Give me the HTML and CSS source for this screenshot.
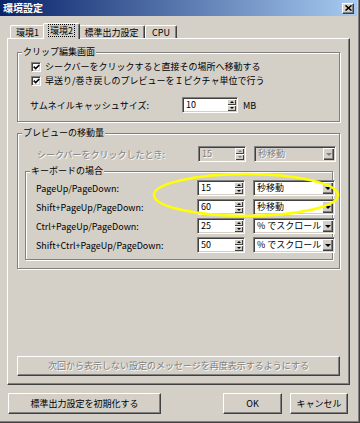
FILE: index.html
```html
<!DOCTYPE html>
<html lang="ja">
<head>
    <meta charset="UTF-8">
    <title>環境設定</title>
    <link rel="stylesheet" href="styles.css">
</head>
<body>

<div class="window">
    <!-- タイトルバー -->
    <div class="titlebar">
        <span class="title">環境設定</span>
        <span class="close-btn">
            <svg width="7" height="6" viewBox="0 0 7 6"><path d="M0.5 0.5 L6.5 5.5 M6.5 0.5 L0.5 5.5" stroke="#000" stroke-width="1.6"/></svg>
        </span>
    </div>

    <div class="dialog">
        <!-- タブ -->
        <div class="tabs">
            <div class="tab tab-1">環境1</div>
            <div class="tab tab-2 active"><span class="focus">環境2</span></div>
            <div class="tab tab-3">標準出力設定</div>
            <div class="tab tab-4">CPU</div>
        </div>

        <div class="panel">
            <fieldset class="group">
                <legend>クリップ編集画面</legend>
                <div class="group-body clip-body">
                    <div class="check-row">
                        <span class="checkbox"><svg width="7" height="6" viewBox="0 0 7 6"><path d="M0.7 2.6 L2.7 4.6 L6.3 1" stroke="#000" stroke-width="1.6" fill="none"/></svg></span>
                        <span>シークバーをクリックすると直接その場所へ移動する</span>
                    </div>
                    <div class="check-row">
                        <span class="checkbox"><svg width="7" height="6" viewBox="0 0 7 6"><path d="M0.7 2.6 L2.7 4.6 L6.3 1" stroke="#000" stroke-width="1.6" fill="none"/></svg></span>
                        <span>早送り/巻き戻しのプレビューをＩピクチャ単位で行う</span>
                    </div>
                    <div class="cache-row">
                        <span class="cache-label">サムネイルキャッシュサイズ:</span>
                        <span class="spin cache-spin">
                            <span class="field-value">10</span>
                            <span class="spin-btns"><span class="spin-btn up"></span><span class="spin-btn down"></span></span>
                        </span>
                        <span class="unit">MB</span>
                    </div>
                </div>
            </fieldset>

            <fieldset class="group preview-group">
                <legend>プレビューの移動量</legend>
                <div class="group-body preview-body">
                    <div class="move-row seek-row disabled">
                        <span class="move-label">シークバーをクリックしたとき:</span>
                        <span class="spin">
                            <span class="field-value">15</span>
                            <span class="spin-btns"><span class="spin-btn up"></span><span class="spin-btn down"></span></span>
                        </span>
                        <span class="combo">
                            <span class="field-value">秒移動</span>
                            <span class="combo-btn"></span>
                        </span>
                    </div>

                    <fieldset class="group key-group">
                        <legend>キーボードの場合</legend>
                        <div class="group-body key-body">
                            <div class="move-row">
                                <span class="move-label">PageUp/PageDown:</span>
                                <span class="spin"><span class="field-value">15</span><span class="spin-btns"><span class="spin-btn up"></span><span class="spin-btn down"></span></span></span>
                                <span class="combo"><span class="field-value">秒移動</span><span class="combo-btn"></span></span>
                            </div>
                            <div class="move-row">
                                <span class="move-label">Shift+PageUp/PageDown:</span>
                                <span class="spin"><span class="field-value">60</span><span class="spin-btns"><span class="spin-btn up"></span><span class="spin-btn down"></span></span></span>
                                <span class="combo"><span class="field-value">秒移動</span><span class="combo-btn"></span></span>
                            </div>
                            <div class="move-row">
                                <span class="move-label">Ctrl+PageUp/PageDown:</span>
                                <span class="spin"><span class="field-value">25</span><span class="spin-btns"><span class="spin-btn up"></span><span class="spin-btn down"></span></span></span>
                                <span class="combo"><span class="field-value">% でスクロール</span><span class="combo-btn"></span></span>
                            </div>
                            <div class="move-row">
                                <span class="move-label">Shift+Ctrl+PageUp/PageDown:</span>
                                <span class="spin"><span class="field-value">50</span><span class="spin-btns"><span class="spin-btn up"></span><span class="spin-btn down"></span></span></span>
                                <span class="combo"><span class="field-value">% でスクロール</span><span class="combo-btn"></span></span>
                            </div>
                        </div>
                    </fieldset>
                </div>
            </fieldset>

            <button class="btn reset-msg-btn" disabled>次回から表示しない設定のメッセージを再度表示するようにする</button>
        </div>

        <!-- 下のボタン -->
        <div class="footer">
            <button class="btn reset-btn">標準出力設定を初期化する</button>
            <button class="btn ok-btn">OK</button>
            <button class="btn cancel-btn">キャンセル</button>
        </div>
    </div>

    <!-- 黄色い丸（注釈） -->
    <svg class="highlight" width="360" height="423" viewBox="0 0 360 423">
        <ellipse cx="246" cy="195" rx="92" ry="21" fill="none" stroke="#ffff00" stroke-width="2.6"/>
    </svg>
</div>

</body>
</html>
```

FILE: styles.css
```css
body {
    margin: 0;
    background: #d4d0c8;
    font-family: "Noto Sans CJK JP", "Noto Sans", sans-serif;
    font-size: 9px;
    color: #000;
}

.window {
    position: relative;
    width: 360px;
    height: 423px;
    box-sizing: border-box;
    padding: 0 3px 3px 0;
    background: #d4d0c8;
    box-shadow: inset -1px -1px 0 #404040, inset -2px -2px 0 #808080;
    display: flex;
    flex-direction: column;
    overflow: hidden;
}

/* タイトルバー */
.titlebar {
    height: 16px;
    flex: none;
    display: flex;
    align-items: center;
    justify-content: space-between;
    padding: 0 3px;
    background: linear-gradient(90deg, #0a246a, #a6caf0);
}

.title {
    color: #fff;
    font-size: 10px;
    font-weight: bold;
    line-height: 14px;
}

.close-btn {
    width: 12px;
    height: 11px;
    box-sizing: border-box;
    background: #d4d0c8;
    border: 1px solid;
    border-color: #fff #404040 #404040 #fff;
    box-shadow: inset -1px -1px 0 #808080;
    display: flex;
    align-items: center;
    justify-content: center;
}

.dialog {
    flex: 1;
    display: flex;
    flex-direction: column;
    padding: 7px 7px 6px 7px;
}

/* タブ */
.tabs {
    display: flex;
    align-items: flex-end;
    height: 15px;
    flex: none;
    padding-left: 3px;
}

.tab {
    height: 13px;
    box-sizing: border-box;
    border: 1px solid #fff;
    border-bottom: none;
    border-right-color: #404040;
    border-radius: 2px 2px 0 0;
    box-shadow: inset -1px 0 0 #808080;
    background: #d4d0c8;
    display: flex;
    align-items: center;
    justify-content: center;
    line-height: 11px;
}

.tab-1 { width: 35px; }
.tab-2 { width: 37px; }
.tab-3 { width: 67px; }
.tab-4 { width: 32px; }

.tab.active {
    height: 16px;
    margin: 0 -2px -1px;
    position: relative;
    z-index: 1;
    padding-bottom: 2px;
}

.focus {
    outline: 1px dotted #000;
    padding: 0 1px;
}

.panel {
    flex: 1;
    display: flex;
    flex-direction: column;
    border: 1px solid;
    border-color: #fff #404040 #404040 #fff;
    box-shadow: inset -1px -1px 0 #808080;
    padding: 7px 9px 8px 9px;
}

/* グループ枠 */
.group {
    margin: 0;
    padding: 0;
    min-width: 0;
    border: 1px solid #808080;
    box-shadow: inset 1px 1px 0 #fff, 1px 1px 0 #fff;
}

.group legend {
    margin-left: 4px;
    padding: 0 1px;
    line-height: 12px;
    background: #d4d0c8;
}

.clip-body {
    padding: 2px 0 8px 12px;
}

.check-row {
    height: 14px;
    display: flex;
    align-items: center;
    gap: 4px;
    line-height: 12px;
}

.checkbox {
    width: 10px;
    height: 10px;
    margin-left: 1px;
    box-sizing: border-box;
    border: 1px solid;
    border-color: #808080 #fff #fff #808080;
    box-shadow: inset 1px 1px 0 #404040, inset -1px -1px 0 #d4d0c8;
    background: #fff;
    display: flex;
    align-items: center;
    justify-content: center;
}

.cache-row {
    margin-top: 9px;
    height: 16px;
    display: flex;
    align-items: center;
}

.cache-label {
    width: 152px;
}

.cache-spin {
    width: 56px;
}

.unit {
    margin-left: 5px;
}

.preview-group {
    margin-top: 5px;
}

.preview-body {
    padding: 7px 6px 8px 7px;
}

.seek-row {
    padding-left: 12px;
}

.key-group {
    margin-top: 3px;
}

.key-body {
    padding: 3px 0 6px 10px;
    display: flex;
    flex-direction: column;
    gap: 3px;
}

.move-row {
    display: grid;
    grid-template-columns: 153px 48px 82px;
    column-gap: 8px;
    align-items: center;
    height: 16px;
}

/* スピンボックスとコンボボックス */
.spin,
.combo {
    height: 16px;
    box-sizing: border-box;
    display: flex;
    border: 1px solid;
    border-color: #808080 #fff #fff #808080;
    box-shadow: inset 1px 1px 0 #404040, inset -1px -1px 0 #d4d0c8;
    background: #fff;
    padding: 1px;
}

.field-value {
    flex: 1;
    padding-left: 2px;
    line-height: 12px;
    white-space: nowrap;
    overflow: hidden;
}

.spin-btns {
    width: 9px;
    display: flex;
    flex-direction: column;
}

.spin-btn,
.combo-btn {
    background: #d4d0c8;
    box-shadow: inset 1px 1px 0 #fff, inset -1px -1px 0 #404040;
    display: flex;
    align-items: center;
    justify-content: center;
}

.spin-btn {
    flex: 1;
}

.spin-btn::after {
    content: "";
    border-left: 2px solid transparent;
    border-right: 2px solid transparent;
}

.spin-btn.up::after {
    border-bottom: 2px solid #000;
}

.spin-btn.down::after {
    border-top: 2px solid #000;
}

.combo-btn {
    width: 11px;
    box-shadow: inset 1px 1px 0 #fff, inset -1px -1px 0 #404040, inset -2px -2px 0 #808080;
}

.combo-btn::after {
    content: "";
    border-left: 3px solid transparent;
    border-right: 3px solid transparent;
    border-top: 3px solid #000;
}

.disabled {
    color: #808080;
}

.disabled .move-label,
.disabled .field-value {
    text-shadow: 1px 1px 0 #fff;
}

.disabled .spin,
.disabled .combo {
    background: #d4d0c8;
}

.disabled .spin-btn.up::after { border-bottom-color: #808080; }
.disabled .spin-btn.down::after { border-top-color: #808080; }
.disabled .combo-btn::after { border-top-color: #808080; }

/* ボタン */
.btn {
    font: inherit;
    color: #000;
    background: #d4d0c8;
    border: 1px solid;
    border-color: #fff #404040 #404040 #fff;
    box-shadow: inset -1px -1px 0 #808080;
    padding: 0;
    line-height: 12px;
}

.btn:disabled {
    color: #808080;
    text-shadow: 1px 1px 0 #fff;
}

.reset-msg-btn {
    margin-top: auto;
    height: 20px;
}

.footer {
    display: flex;
    flex: none;
    margin-top: 8px;
    height: 21px;
}

.reset-btn {
    margin-left: 1px;
    width: 153px;
}

.ok-btn {
    margin-left: auto;
    width: 59px;
}

.cancel-btn {
    margin-left: 8px;
    margin-right: 2px;
    width: 58px;
}

/* 注釈の楕円 */
.highlight {
    position: absolute;
    left: 0;
    top: 0;
    pointer-events: none;
}
```
